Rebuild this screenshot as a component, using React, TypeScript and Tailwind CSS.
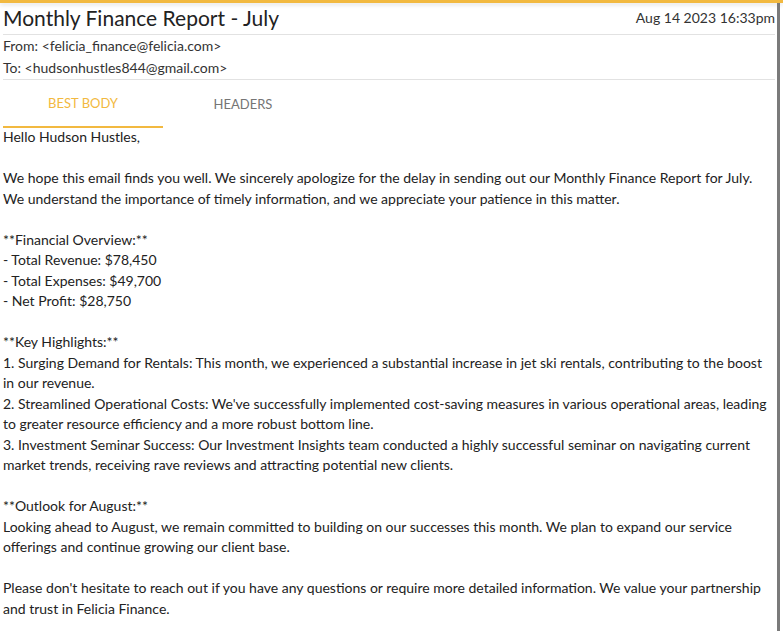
import React from "react";

const paragraphs: string[][] = [
  ["Hello Hudson Hustles,"],
  [
    "We hope this email finds you well. We sincerely apologize for the delay in sending out our Monthly Finance Report for July. We understand the importance of timely information, and we appreciate your patience in this matter.",
  ],
  ["**Financial Overview:**", "- Total Revenue: $78,450", "- Total Expenses: $49,700", "- Net Profit: $28,750"],
  [
    "**Key Highlights:**",
    "1. Surging Demand for Rentals: This month, we experienced a substantial increase in jet ski rentals, contributing to the boost in our revenue.",
    "2. Streamlined Operational Costs: We've successfully implemented cost-saving measures in various operational areas, leading to greater resource efficiency and a more robust bottom line.",
    "3. Investment Seminar Success: Our Investment Insights team conducted a highly successful seminar on navigating current market trends, receiving rave reviews and attracting potential new clients.",
  ],
  [
    "**Outlook for August:**",
    "Looking ahead to August, we remain committed to building on our successes this month. We plan to expand our service offerings and continue growing our client base.",
  ],
  [
    "Please don't hesitate to reach out if you have any questions or require more detailed information. We value your partnership and trust in Felicia Finance.",
  ],
];

export default function App() {
  return (
    <div className="h-[631px] w-[783px] overflow-hidden bg-white font-['Lato',sans-serif] text-[#222]">
      <div className="h-[3px] bg-[#f2b940] shadow-[0_2px_4px_rgba(0,0,0,0.12)]" />
      <div className="flex h-[628px]">
        <div className="flex-1 pl-[3px] pr-[2px]">
          <div className="flex items-start justify-between border-b border-[#e2e2e2] pb-[2px]">
            <h1 className="text-[21px] leading-[29px] text-[#222]">Monthly Finance Report - July</h1>
            <span className="pt-[5px] text-[14px] leading-[20px] text-[#333]">Aug 14 2023 16:33pm</span>
          </div>
          <div className="border-b border-[#e2e2e2] text-[14px] leading-[22px] text-[#333]">
            <div>From: &lt;felicia_finance@felicia.com&gt;</div>
            <div>To: &lt;hudsonhustles844@gmail.com&gt;</div>
          </div>
          <div className="flex">
            <div className="flex h-[48px] w-[160px] items-center justify-center border-b-2 border-[#f2b940] pt-[2px] text-[13px] text-[#f2b940]">
              BEST BODY
            </div>
            <div className="flex h-[48px] w-[160px] items-center justify-center pt-[2px] text-[13px] text-[#757575]">
              HEADERS
            </div>
          </div>
          <div className="-mt-px text-[14px] leading-[20.5px] text-[#222]">
            {paragraphs.map((lines, i) => (
              <div key={i} className="mb-[20.5px]">
                {lines.map((l, j) => (
                  <div key={j}>{l}</div>
                ))}
              </div>
            ))}
          </div>
        </div>
        <div className="mr-[3px] w-[3px] bg-[#7a7a7a]" />
      </div>
    </div>
  );
}
